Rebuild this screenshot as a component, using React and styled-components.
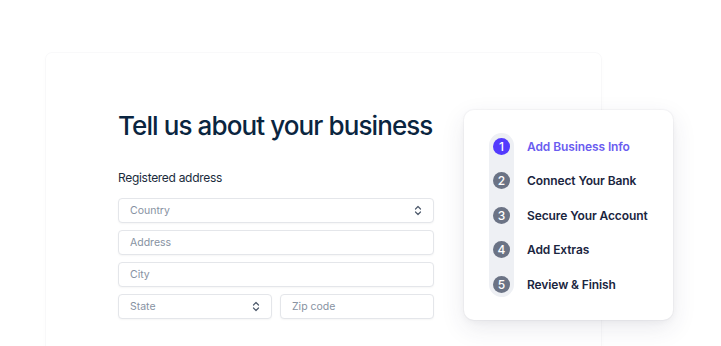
import React from 'react';
import styled, { createGlobalStyle } from 'styled-components';

const GlobalStyle = createGlobalStyle`
  html, body {
    margin: 0;
    padding: 0;
    background: #ffffff;
    overflow: hidden;
  }
  body {
    font-family: "Inter", "Noto Sans", sans-serif;
    -webkit-font-smoothing: antialiased;
  }
`;

const Page = styled.div`
  width: 721px;
  height: 346px;
  padding: 53px 0 0 46px;
  box-sizing: border-box;
  overflow: hidden;
`;

const FormCard = styled.div`
  position: relative;
  width: 555px;
  height: 320px;
  box-sizing: border-box;
  padding: 57px 0 0 72px;
  background: #ffffff;
  border-radius: 6px;
  box-shadow: 0 0 0 1px rgba(50, 50, 93, 0.025), 0 2px 6px rgba(50, 50, 93, 0.025);
`;

const Title = styled.h1`
  margin: 0;
  font-size: 26px;
  line-height: 32px;
  font-weight: 500;
  letter-spacing: -0.9px;
  color: #0a2540;
`;

const Label = styled.div`
  margin-top: 28px;
  font-size: 12px;
  line-height: 16px;
  letter-spacing: -0.3px;
  color: #1a2b3c;
`;

const Fields = styled.div`
  margin-top: 12px;
  width: 316px;
  display: flex;
  flex-direction: column;
  gap: 7px;
`;

const Row = styled.div`
  display: flex;
  gap: 8px;
`;

const Field = styled.div`
  flex: ${(p) => (p.$half ? '1 1 0' : '0 0 auto')};
  height: 25px;
  box-sizing: border-box;
  padding: 0 11px;
  display: flex;
  align-items: center;
  justify-content: space-between;
  border: 1px solid #e4e6ea;
  border-radius: 4px;
  background: #ffffff;
  box-shadow: 0 1px 2px rgba(0, 0, 0, 0.04);
  font-size: 10.5px;
  color: #8792a2;
`;

const StepCard = styled.div`
  position: absolute;
  left: 418px;
  top: 57px;
  width: 209px;
  height: 210px;
  box-sizing: border-box;
  padding: 23px 0 0 25px;
  background: #ffffff;
  border-radius: 10px;
  box-shadow: 0 0 0 1px rgba(50, 50, 93, 0.03), 0 8px 24px rgba(50, 50, 93, 0.1),
    0 2px 6px rgba(0, 0, 0, 0.04);
`;

const StepList = styled.div`
  position: relative;
  display: flex;
  flex-direction: column;
  gap: 16.6px;
  padding-top: 4px;
  &::before {
    content: '';
    position: absolute;
    left: 0;
    top: 0;
    width: 25px;
    height: 164px;
    border-radius: 13px;
    background: #eef0f4;
  }
`;

const Step = styled.div`
  position: relative;
  display: flex;
  align-items: center;
  height: 18px;
`;

const Dot = styled.span`
  width: 17px;
  height: 17px;
  margin-left: 4px;
  border-radius: 50%;
  display: flex;
  align-items: center;
  justify-content: center;
  background: ${(p) => (p.$active ? '#533afd' : '#6b7385')};
  color: #ffffff;
  font-size: 12px;
  font-weight: 500;
`;

const StepName = styled.span`
  margin-left: 17px;
  font-size: 12px;
  font-weight: 600;
  letter-spacing: -0.1px;
  color: ${(p) => (p.$active ? '#6a5cf0' : '#1a2540')};
`;

const Chevrons = () => (
  <svg width="8" height="11" viewBox="0 0 8 11" fill="none">
    <path d="M1.5 4L4 1.5L6.5 4" stroke="#4f5b6d" strokeWidth="1.2" strokeLinecap="round" strokeLinejoin="round" />
    <path d="M1.5 7L4 9.5L6.5 7" stroke="#4f5b6d" strokeWidth="1.2" strokeLinecap="round" strokeLinejoin="round" />
  </svg>
);

const steps = [
  'Add Business Info',
  'Connect Your Bank',
  'Secure Your Account',
  'Add Extras',
  'Review & Finish',
];

export default function App() {
  return (
    <Page>
      <GlobalStyle />
      <FormCard>
        <Title>Tell us about your business</Title>
        <Label>Registered address</Label>
        <Fields>
          <Field>
            Country
            <Chevrons />
          </Field>
          <Field>Address</Field>
          <Field>City</Field>
          <Row>
            <Field $half>
              State
              <Chevrons />
            </Field>
            <Field $half>Zip code</Field>
          </Row>
        </Fields>
        <StepCard>
          <StepList>
            {steps.map((name, i) => (
              <Step key={name}>
                <Dot $active={i === 0}>{i + 1}</Dot>
                <StepName $active={i === 0}>{name}</StepName>
              </Step>
            ))}
          </StepList>
        </StepCard>
      </FormCard>
    </Page>
  );
}
